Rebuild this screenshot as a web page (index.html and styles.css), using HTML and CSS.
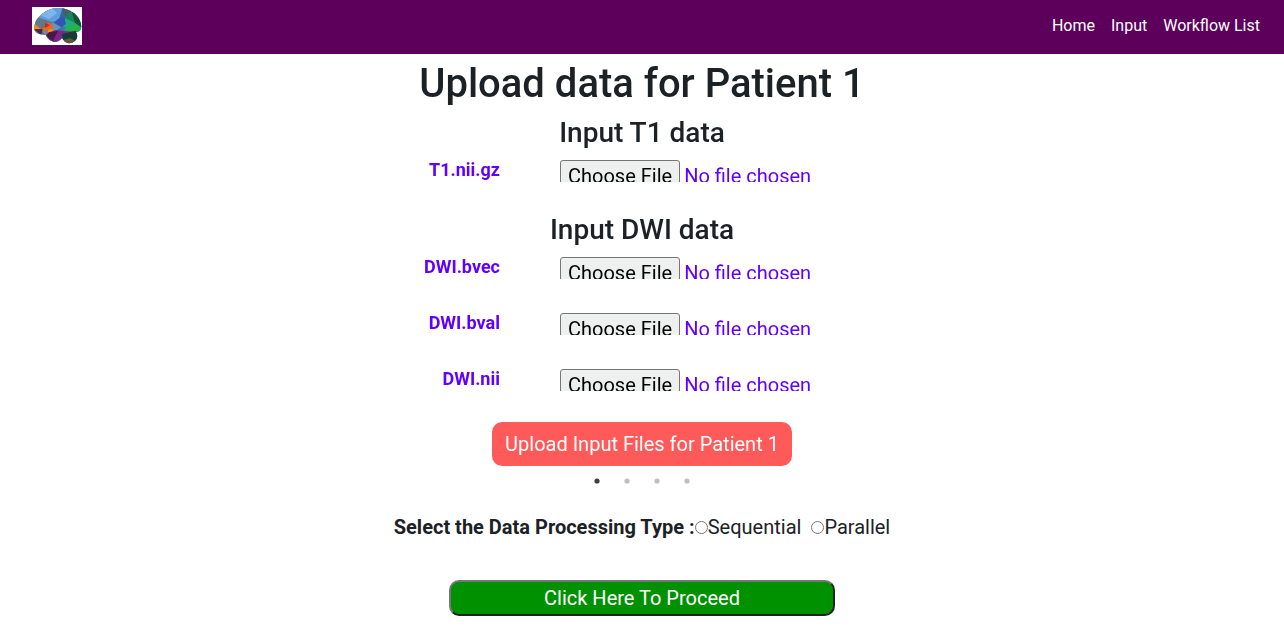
FILE: index.html
```html
<!DOCTYPE html>
<html lang="en">
<head>
<meta charset="utf-8">
<title>Upload data</title>
<link rel="stylesheet" href="styles.css">
</head>
<body>
<nav class="navbar">
  <svg class="logo" viewBox="0 0 50 38" aria-label="Brain logo">
    <defs>
      <clipPath id="brain"><path d="M2 21C3 16 4 12 8 9C12 4 19 1 26 1C34 1 40 4 44 8C48 12 50 17 49 22Q48 25 44 25Q47 30 43 34Q38 38 33 35L30 31Q27 35 22 35Q15 33 14 28Q10 28 7 27Q2 25 2 21Z"/></clipPath>
    </defs>
    <rect width="50" height="38" fill="#fff"/>
    <g clip-path="url(#brain)">
      <rect width="50" height="38" fill="#3d73b0"/>
      <path d="M0 18L7 9L21 15L10 24L0 23Z" fill="#627884"/>
      <path d="M5 10L20 0H31L27 13L20 15Z" fill="#609edf"/>
      <path d="M8 8L20 1L25 6L17 12Z" fill="#7db5ed"/>
      <path d="M27 12L31 0L37 5L34 16Z" fill="#34679b"/>
      <path d="M30 0L39 3L38 10L32 8Z" fill="#426062"/>
      <path d="M36 6L42 5L48 14L43 16L34 15Z" fill="#168756"/>
      <path d="M39 2L50 11V21L43 16Z" fill="#14503d"/>
      <path d="M33 11L43 16L36 22L31 19Z" fill="#26a989"/>
      <path d="M43 16L50 21L46 26L31 23Z" fill="#20b646"/>
      <path d="M26 12L32 10L34 17L29 20L22 16Z" fill="#3156b5"/>
      <path d="M20 15L29 20L24 24L18 23Z" fill="#6b93b7"/>
      <path d="M0 15L10 23L0 23Z" fill="#f49013"/>
      <path d="M2 22H11L9 28Z" fill="#53233f"/>
      <path d="M10 23L17 15L22 21L15 25Z" fill="#f2641c"/>
      <path d="M13 16L18 18L13 21Z" fill="#d52024"/>
      <path d="M10 24L16 23L20 26L14 30Z" fill="#7c878a"/>
      <path d="M16 23L20 22L22 26L16 27Z" fill="#eb9c17"/>
      <path d="M14 27L24 23L39 25L29 35L19 36Z" fill="#792887"/>
      <path d="M17 25L26 24L21 34L14 29Z" fill="#491849"/>
      <path d="M30 27L44 24L47 31L39 37L31 34Z" fill="#103e32"/>
      <path d="M31 33L38 31L43 34L38 38Z" fill="#655638"/>
      <path d="M36 25L44 24L41 27Z" fill="#51204f"/>
    </g>
  </svg>
  <div class="links"><a>Home</a><a>Input</a><a>Workflow List</a></div>
</nav>
<main>
  <section class="slide">
    <h1>Upload data for Patient 1</h1>
    <h3>Input T1 data</h3>
    <div class="row"><label class="name" for="t1">T1.nii.gz</label><input class="file" id="t1" type="file"></div>
    <h3>Input DWI data</h3>
    <div class="row"><label class="name" for="bvec">DWI.bvec</label><input class="file" id="bvec" type="file"></div>
    <div class="row"><label class="name" for="bval">DWI.bval</label><input class="file" id="bval" type="file"></div>
    <div class="row"><label class="name" for="nii">DWI.nii</label><input class="file" id="nii" type="file"></div>
    <button class="upload">Upload Input Files for Patient 1</button>
  </section>
  <div class="dots"><i class="dot active"></i><i class="dot"></i><i class="dot"></i><i class="dot"></i></div>
  <div class="processing"><b>Select the Data Processing Type :</b><input class="radio" type="radio" name="type" id="seq"><label for="seq">Sequential</label><input class="radio second" type="radio" name="type" id="par"><label for="par">Parallel</label></div>
  <button class="proceed">Click Here To Proceed</button>
</main>
</body>
</html>
```
FILE: styles.css
```css
* { box-sizing: border-box; }
body { margin: 0; height: 635px; overflow: hidden; background: #fff; color: #1b2125; font: 20px/30px Roboto, sans-serif; }
.navbar { display: flex; justify-content: space-between; height: 54px; padding: 7px 24px 0 32px; background: #5c005c; }
.logo { width: 50px; height: 38px; }
.links { display: flex; gap: 16px; padding-top: 7px; color: #fff; font-size: 16px; line-height: 24px; }
main { display: flex; flex-direction: column; align-items: center; }
.slide { display: flex; flex-direction: column; align-items: center; width: 1284px; height: 412px; padding-top: 6px; will-change: transform; }
h1, h3 { margin: 0 0 8px; font-weight: 500; line-height: 1.2; }
h1 { font-size: 40px; }
h3 { height: 36px; font-size: 28px; }
.row { display: flex; width: 460px; height: 22px; margin-bottom: 34px; }
.row:has(+ h3) { margin-bottom: 31px; }
.name { width: 88px; margin-right: 60px; color: #6200ff; font-size: 18px; font-weight: 700; line-height: 20px; text-align: right; }
.file { width: 312px; height: 22px; padding: 0; overflow: hidden; color: #6200ff; font: 20px/30px Roboto, sans-serif; }
.file::file-selector-button { box-sizing: border-box; height: 31px; padding: 1px 7px 0; border: 1px solid #767676; border-radius: 3px; background: #eef0f0; font: 20px/27px Roboto, sans-serif; }
.upload { width: 300px; height: 44px; flex: none; margin-top: -3px; padding: 0; border: 0; border-radius: 10px; background: #ff5a5a; color: #fff; font: 20px Roboto, sans-serif; }
.dots { display: flex; gap: 24px; height: 6px; margin-top: 12px; }
.dot { width: 6px; height: 6px; border-radius: 50%; background: #bfbfbf; transform: scale(.87); }
.dot.active { background: #404040; }
.processing { display: flex; align-items: center; height: 30px; margin-top: 28px; }
.radio { width: 13px; height: 13px; margin: 1px 0 0; }
.radio.second { margin-left: 10px; }
.proceed { width: 386px; height: 36px; margin-top: 38px; padding: 0; border: 2px solid; border-color: #767676 #212121 #212121 #767676; border-radius: 10px; background: #009100; color: #fff; font: 20px Roboto, sans-serif; }
```
